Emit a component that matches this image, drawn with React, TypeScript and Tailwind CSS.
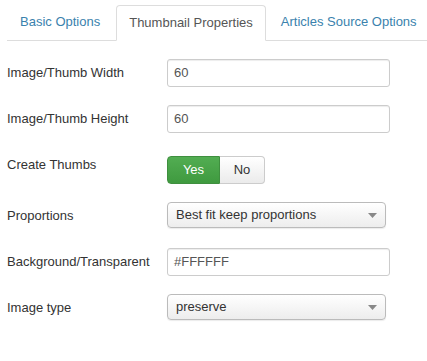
import React from "react";

const font = { fontFamily: '"Liberation Sans", Arial, sans-serif' };

function Caret() {
  return (
    <svg width="9" height="5" viewBox="0 0 9 5" className="absolute right-[8px] top-[10px]">
      <path d="M0 0 L9 0 L4.5 5 Z" fill="#888" />
    </svg>
  );
}

function TextInput({ value }: { value: string }) {
  return (
    <div className="box-border flex h-[28px] w-[223px] items-center rounded-[3px] border border-[#cccccc] bg-white px-[6px] text-[13px] text-[#555] shadow-[inset_0_1px_1px_rgba(0,0,0,0.075)]">
      {value}
    </div>
  );
}

function Select({ value }: { value: string }) {
  return (
    <div className="relative box-border flex h-[26px] w-[219px] items-center rounded-[4px] border border-[#bbbbbb] bg-gradient-to-b from-white to-[#ededed] px-[8px] text-[13px] text-[#333] shadow-[0_1px_1px_rgba(0,0,0,0.08)]">
      {value}
      <Caret />
    </div>
  );
}

function Row({
  label,
  children,
  last,
}: {
  label: string;
  children: React.ReactNode;
  last?: boolean;
}) {
  return (
    <div className={`flex ${last ? "" : "mb-[18px]"}`}>
      <div className="w-[160px] shrink-0 pt-[5px] text-[13px] leading-[18px] text-[#333]">
        {label}
      </div>
      <div className="min-h-[28px]">{children}</div>
    </div>
  );
}

export default function App() {
  return (
    <div className="h-[361px] w-[427px] overflow-hidden bg-white pl-[7px] pt-[5px] antialiased" style={font}>
      {/* Tabs */}
      <div className="flex whitespace-nowrap border-b border-[#dddddd] text-[13px] leading-[18px]">
        <div className="mr-[3px] shrink-0 px-[13px] py-[8px] text-[#3a82ad]">Basic Options</div>
        <div className="relative -mb-px mr-[2px] shrink-0 rounded-t-[4px] border border-[#dddddd] border-b-white bg-white px-[12px] py-[8px] text-[#555]">
          Thumbnail Properties
        </div>
        <div className="shrink-0 px-[13px] py-[8px] text-[#3a82ad]">Articles Source Options</div>
      </div>

      <div className="pt-[18px]">
        <Row label="Image/Thumb Width">
          <TextInput value="60" />
        </Row>
        <Row label="Image/Thumb Height">
          <TextInput value="60" />
        </Row>
        <Row label="Create Thumbs">
          <div className="mt-[5px] flex h-[28px] text-[13px]">
            <div className="flex w-[53px] items-center justify-center rounded-l-[4px] border border-[#3f8f3f] bg-gradient-to-b from-[#52ad52] to-[#3f9a3f] text-white">
              Yes
            </div>
            <div className="flex w-[45px] items-center justify-center rounded-r-[4px] border border-l-0 border-[#cccccc] bg-gradient-to-b from-white to-[#ebebeb] text-[#333]">
              No
            </div>
          </div>
        </Row>
        <Row label="Proportions">
          <Select value="Best fit keep proportions" />
        </Row>
        <Row label="Background/Transparent">
          <TextInput value="#FFFFFF" />
        </Row>
        <Row label="Image type" last>
          <Select value="preserve" />
        </Row>
      </div>
    </div>
  );
}
